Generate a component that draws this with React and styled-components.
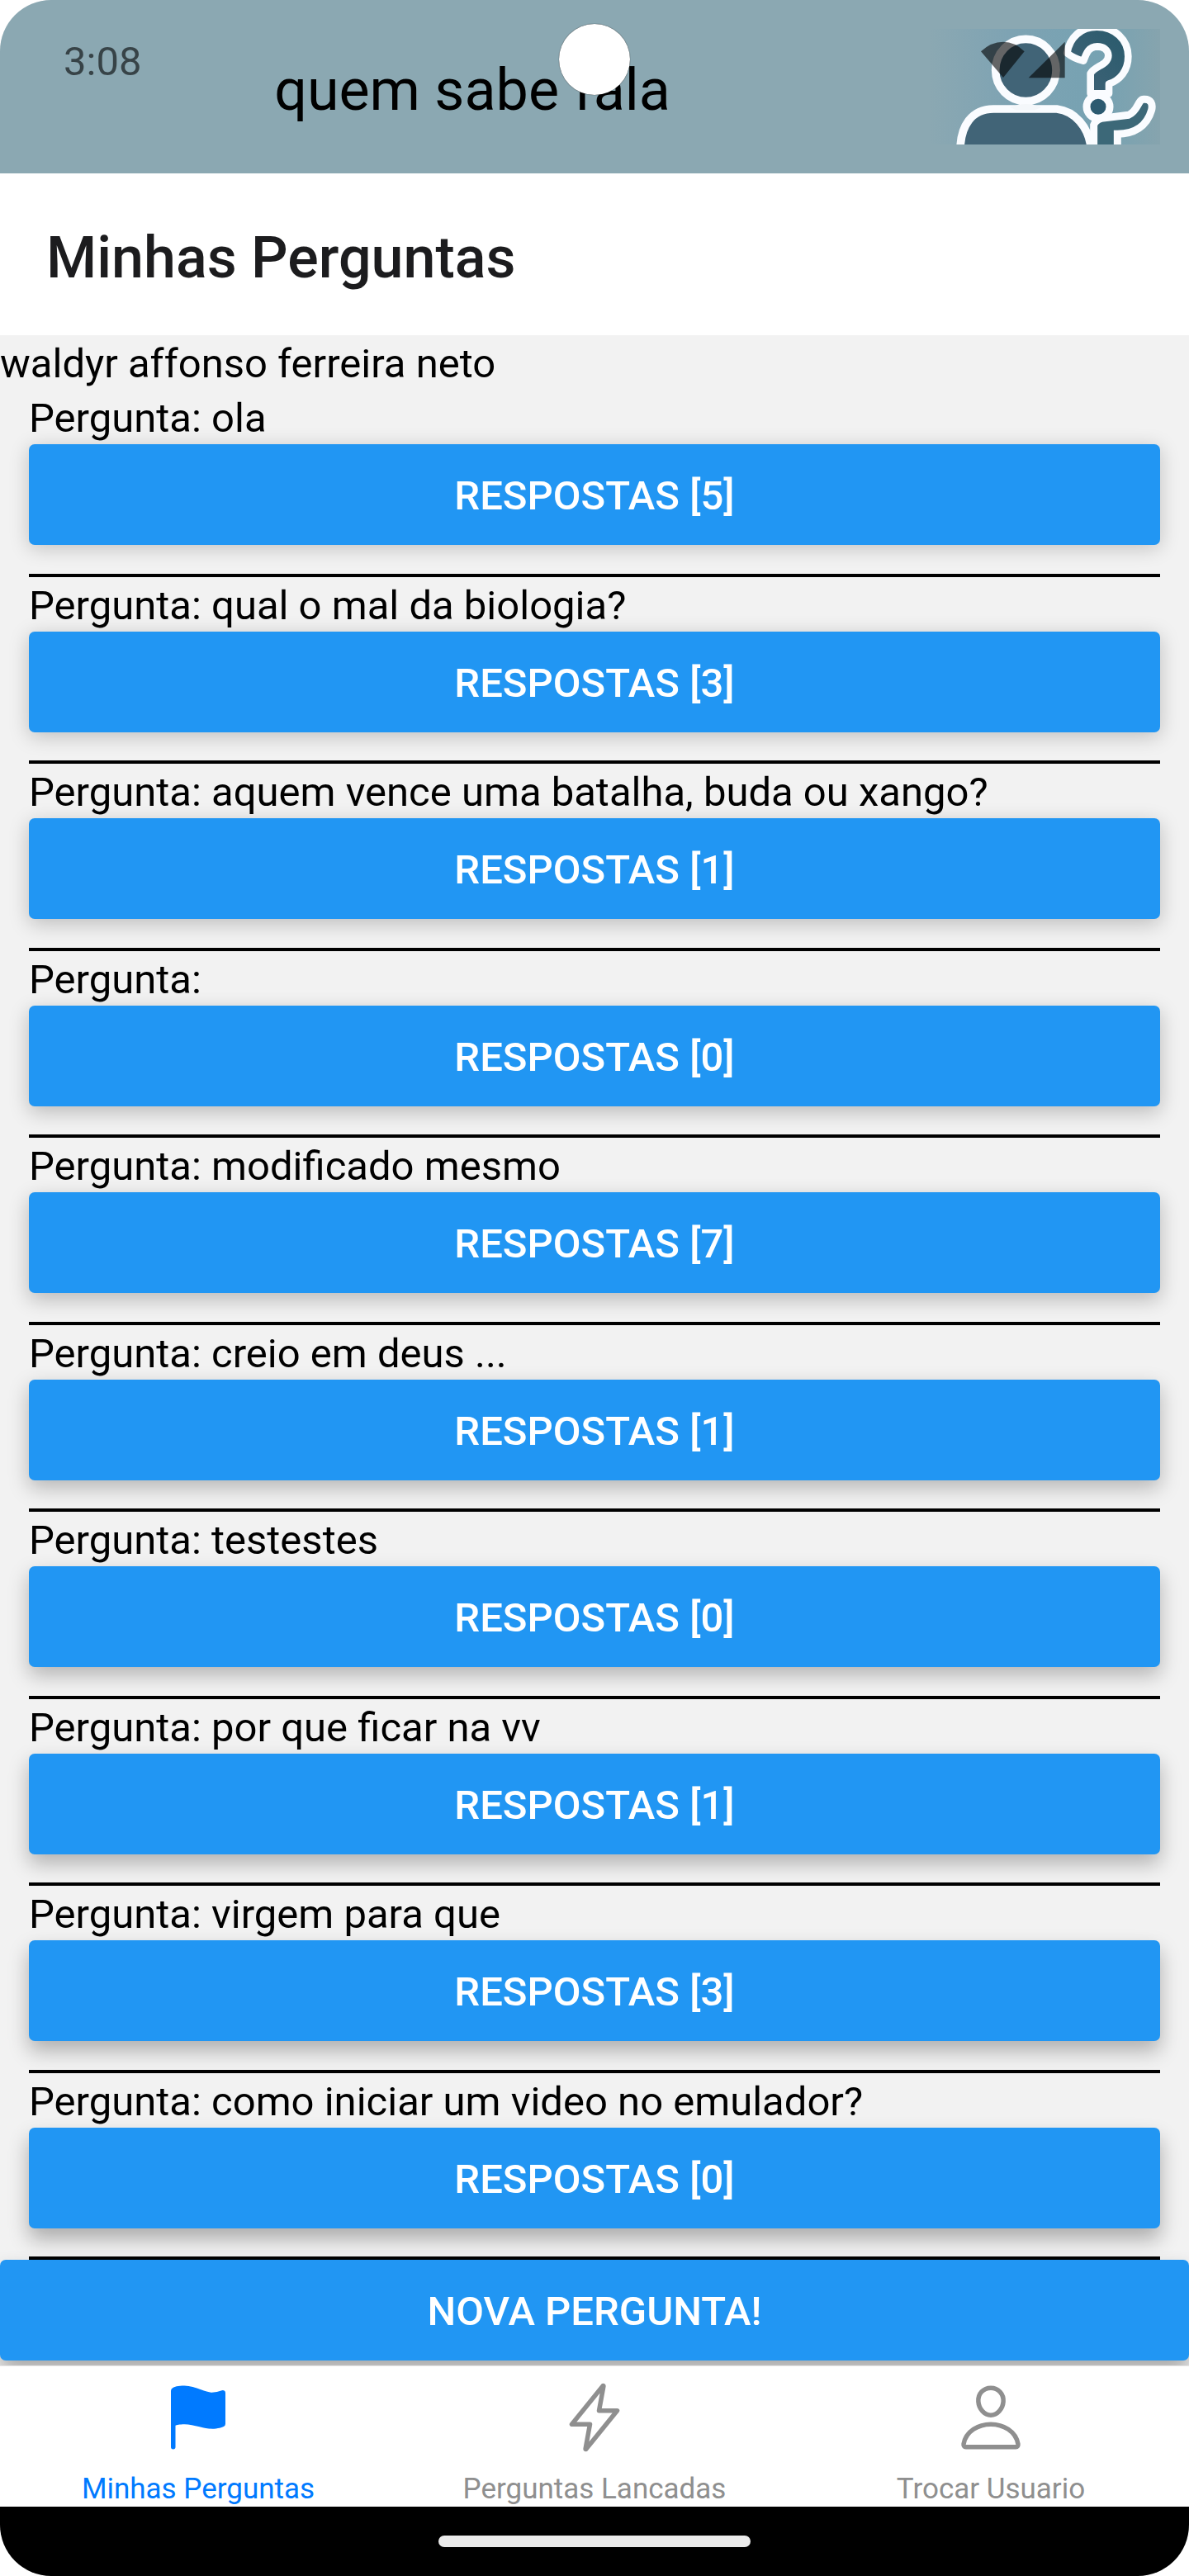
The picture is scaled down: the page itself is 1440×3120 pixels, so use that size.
import React from "react";
import styled, { createGlobalStyle } from "styled-components";
import { IoFlag, IoFlashOutline, IoPersonOutline } from "react-icons/io5";

const GlobalStyle = createGlobalStyle`
  *, *::before, *::after { box-sizing: border-box; }
  body { margin: 0; background: #fff; font-family: Roboto, "Liberation Sans", sans-serif; }
`;

const Screen = styled.div`
  position: relative;
  display: flex;
  flex-direction: column;
  min-height: 100vh;
  overflow: hidden;
  border-radius: 62px;
  background: #f2f2f2;
  color: #000;
`;

const StatusBar = styled.div`
  position: absolute;
  inset: 0 0 auto 0;
  display: flex;
  align-items: flex-start;
  justify-content: space-between;
  padding: 46px 150px 0 77px;
  color: rgba(0, 0, 0, 0.6);
`;

const Clock = styled.time`
  font-size: 49px;
  line-height: 58px;
`;

const StatusIcons = styled.svg`
  width: 102px;
  height: 52px;
  fill: currentColor;
`;

const CameraHole = styled.div`
  position: absolute;
  top: 29px;
  left: 50%;
  width: 86px;
  height: 86px;
  margin-left: -43px;
  border-radius: 50%;
  background: #fff;
  box-shadow: 0 0 1px #000;
`;

const AppHeader = styled.header`
  display: flex;
  align-items: center;
  gap: 16px;
  padding: 35px;
  background: #8ba8b2;
`;

const AppName = styled.p`
  flex: 1;
  margin: 0;
  padding-top: 8px;
  font-size: 70px;
  line-height: 84px;
  text-align: center;
`;

const Logo = styled.svg`
  display: block;
  width: 280px;
  height: 140px;
`;

const TitleBar = styled.div`
  padding: 60px 56px 52px;
  background: #fff;
`;

const Title = styled.h1`
  margin: 0;
  font-size: 70px;
  font-weight: 500;
  line-height: 84px;
  color: #1c1c1e;
`;

const Main = styled.main`
  flex: 1;
  display: flex;
  flex-direction: column;
  padding-bottom: 6px;
`;

const BodyText = styled.p`
  margin: 0;
  padding-top: 4px;
  font-size: 49px;
  line-height: 62px;
`;

const QuestionList = styled.ul`
  flex: 1;
  display: flex;
  flex-direction: column;
  margin: 0;
  padding: 0 35px;
  list-style: none;
`;

const Question = styled.li`
  flex: 1;
  padding-bottom: 34px;
  border-bottom: 4px solid #000;
`;

const ActionButton = styled.button`
  display: block;
  width: 100%;
  padding: 32px 28px 28px;
  border: 0;
  border-radius: 7px;
  background: #2196f3;
  color: #fff;
  font-family: inherit;
  font-size: 49px;
  font-weight: 500;
  line-height: 62px;
  text-transform: uppercase;
  cursor: pointer;
  box-shadow: 0 ${(p) => 4 + p.$depth}px 24px rgba(0, 0, 0, ${(p) => (20 + p.$depth) / 100});
`;

const TabBar = styled.nav`
  display: flex;
  border-top: 1px solid #e6e6e6;
  background: #fff;
`;

const Tab = styled.a`
  flex: 1;
  display: flex;
  flex-direction: column;
  align-items: center;
  gap: 22px;
  padding-top: 18px;
  font-size: 35px;
  line-height: 42px;
  text-decoration: none;
  color: ${(p) => (p.$active ? "#007aff" : "#8f8f8f")};

  svg { display: block; width: 88px; height: 88px; }
`;

const GestureBar = styled.div`
  display: flex;
  justify-content: center;
  padding: 35px;
  background: #000;
`;

const GestureHandle = styled.div`
  width: 378px;
  height: 14px;
  border-radius: 7px;
  background: #ebebeb;
`;

const questions = [
  { text: "ola", answers: 5 },
  { text: "qual o mal da biologia?", answers: 3 },
  { text: "aquem vence uma batalha, buda ou xango?", answers: 1 },
  { text: "", answers: 0 },
  { text: "modificado mesmo", answers: 7 },
  { text: "creio em deus ...", answers: 1 },
  { text: "testestes", answers: 0 },
  { text: "por que ficar na vv", answers: 1 },
  { text: "virgem para que", answers: 3 },
  { text: "como iniciar um video no emulador?", answers: 0 },
];

const tabs = [
  { label: "Minhas Perguntas", Icon: IoFlag, active: true },
  { label: "Perguntas Lancadas", Icon: IoFlashOutline },
  { label: "Trocar Usuario", Icon: IoPersonOutline },
];

function LogoArt() {
  return (
    <Logo viewBox="15 45 840 420" aria-hidden="true">
      <defs>
        <linearGradient id="sky" x1="0" x2="1" y1="0" y2="0">
          <stop offset="0" stopColor="#8ba8b2" />
          <stop offset="0.35" stopColor="#7ea3b3" />
          <stop offset="0.75" stopColor="#76a2b2" />
          <stop offset="1" stopColor="#86a4ae" />
        </linearGradient>
        <linearGradient id="ink" x1="0" x2="1" y1="1" y2="0">
          <stop offset="0" stopColor="#426478" />
          <stop offset="1" stopColor="#285a6c" />
        </linearGradient>
      </defs>
      <rect x="15" y="45" width="840" height="420" fill="url(#sky)" />
      <g fill="#416477" stroke="#fafcff" strokeWidth="29">
        <path d="M129 480C131 400 168 336 250 336H480C544 344 596 400 604 480Z" />
        <ellipse cx="367" cy="195" rx="110" ry="113" />
      </g>
      <path d="M310 330Q368 306 424 330L400 340H330Z" fill="#f4f7fa" />
      <path
        d="M614 480V394Q620 376 642 370L740 358C776 344 774 300 796 301C822 300 829 318 824 340C806 402 758 427 700 427V480Z"
        fill="#3c6878"
        stroke="#fafcff"
        strokeWidth="27"
      />
      <path
        d="M517 133C526 74 570 38 625 38C690 38 739 84 739 145C739 198 708 232 669 245V280H602V207C616 180 667 176 667 142C666 120 648 109 627 109C596 110 588 130 577 161Q544 154 517 133Z"
        fill="url(#ink)"
        stroke="#fafcff"
        strokeWidth="26"
        strokeLinejoin="round"
      />
      <circle cx="630" cy="328" r="42" fill="#2c5a70" stroke="#fafcff" strokeWidth="27" />
    </Logo>
  );
}

export default function App() {
  return (
    <>
      <GlobalStyle />
      <Screen>
        <AppHeader>
          <AppName>quem sabe fala</AppName>
          <LogoArt />
        </AppHeader>
        <TitleBar>
          <Title>Minhas Perguntas</Title>
        </TitleBar>
        <Main>
          <BodyText>waldyr affonso ferreira neto</BodyText>
          <QuestionList>
            {questions.map((q, i) => (
              <Question key={i}>
                <BodyText>Pergunta: {q.text}</BodyText>
                <ActionButton type="button" $depth={i}>
                  Respostas [{q.answers}]
                </ActionButton>
              </Question>
            ))}
          </QuestionList>
          <ActionButton type="button" $depth={10}>
            Nova pergunta!
          </ActionButton>
        </Main>
        <TabBar>
          {tabs.map(({ label, Icon, active }) => (
            <Tab key={label} href="#" $active={active} aria-current={active ? "page" : undefined}>
              <Icon aria-hidden="true" />
              {label}
            </Tab>
          ))}
        </TabBar>
        <GestureBar>
          <GestureHandle />
        </GestureBar>
        <StatusBar>
          <Clock>3:08</Clock>
          <StatusIcons viewBox="204 78 306 156" aria-hidden="true">
            <path d="M285 222L204 127Q240 92 285 92Q328 92 362 127Z" />
            <path d="M377 223H509V92Z" />
          </StatusIcons>
        </StatusBar>
        <CameraHole />
      </Screen>
    </>
  );
}
